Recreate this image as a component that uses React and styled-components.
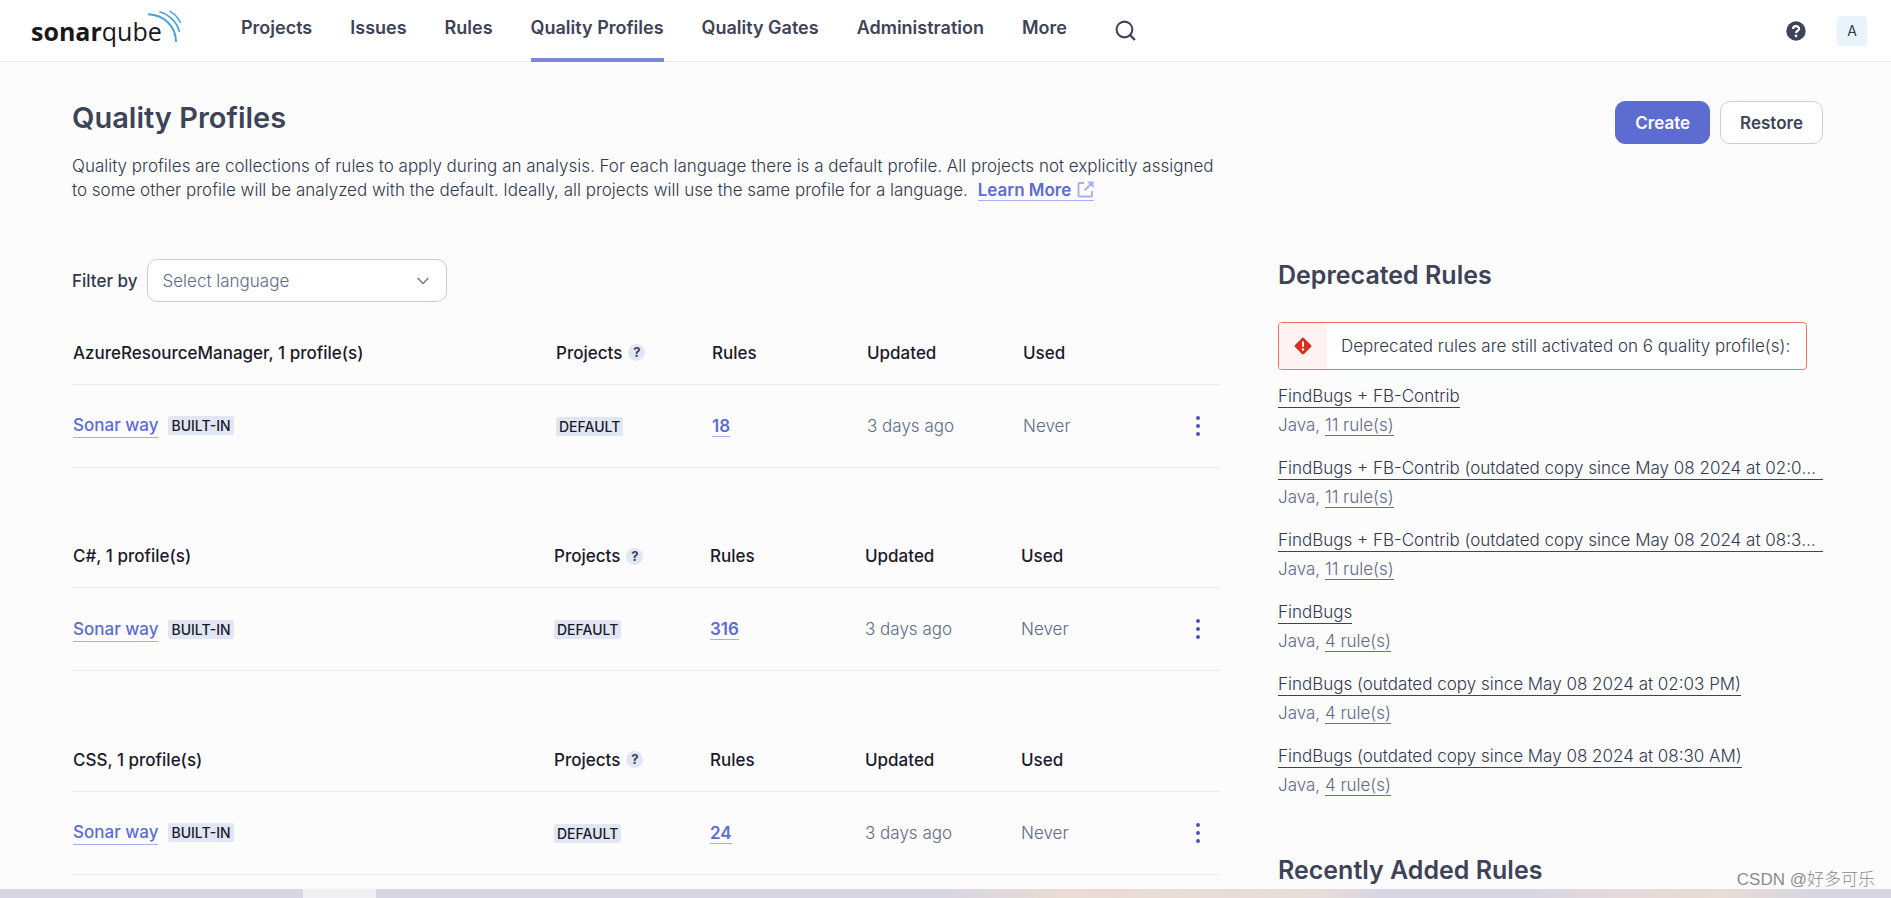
import styled, { createGlobalStyle } from "styled-components";

const GlobalStyle = createGlobalStyle`
  * {
    box-sizing: border-box;
  }

  html,
  body {
    margin: 0;
    height: 100%;
    overflow: hidden;
    background: #fcfcfd;
  }

  #root {
    height: 100%;
  }

  body,
  button,
  select {
    font-family: Inter, "Noto Sans CJK SC", sans-serif;
    font-size: 17px;
    font-weight: 300;
    line-height: 24px;
    color: #33384d;
  }
`;

const navItems = [
  "Projects",
  "Issues",
  "Rules",
  "Quality Profiles",
  "Quality Gates",
  "Administration",
  "More",
];

const languages = [
  { name: "AzureResourceManager", rules: 18, nameWidth: 473 },
  { name: "C#", rules: 316, nameWidth: 471 },
  { name: "CSS", rules: 24, nameWidth: 471 },
];

const deprecated = [
  { name: "FindBugs + FB-Contrib", rules: 11 },
  {
    name: "FindBugs + FB-Contrib (outdated copy since May 08 2024 at 02:03 PM)",
    rules: 11,
  },
  {
    name: "FindBugs + FB-Contrib (outdated copy since May 08 2024 at 08:30 AM)",
    rules: 11,
  },
  { name: "FindBugs", rules: 4 },
  { name: "FindBugs (outdated copy since May 08 2024 at 02:03 PM)", rules: 4 },
  { name: "FindBugs (outdated copy since May 08 2024 at 08:30 AM)", rules: 4 },
];

const Logo = () => (
  <LogoLink href="#" aria-label="SonarQube">
    <svg width="152" height="40" viewBox="0 0 152 40">
      <text
        x="0"
        y="31"
        fontFamily="Open Sans, sans-serif"
        fontSize="25"
        fontWeight="700"
        fill="#1b171b"
      >
        sonar
        <tspan fontWeight="400">qube</tspan>
      </text>
      <g fill="none" stroke="#4b9fd5">
        <path d="M117 4.300C133 5 145 16 145 32" strokeWidth="2" />
        <path d="M128.500 1.700C138 4.500 146 12 148.500 22" strokeWidth="1.700" />
        <path d="M138.500 .8C143 3.500 147.500 8 149.700 13" strokeWidth="1.400" />
      </g>
    </svg>
  </LogoLink>
);

const ProfileTable = ({ language }) => (
  <Table>
    <colgroup>
      <col style={{ width: language.nameWidth }} />
      <col style={{ width: 156 }} />
      <col style={{ width: 155 }} />
      <col style={{ width: 156 }} />
      <col />
      <col style={{ width: 54 }} />
    </colgroup>
    <thead>
      <tr>
        <Th>{language.name}, 1 profile(s)</Th>
        <Th>
          <HelpLabel>
            Projects
            <HelpBadge>?</HelpBadge>
          </HelpLabel>
        </Th>
        <Th>Rules</Th>
        <Th>Updated</Th>
        <Th>Used</Th>
        <Th />
      </tr>
    </thead>
    <tbody>
      <tr>
        <Td>
          <NameCell>
            <ProfileLink href="#">Sonar way</ProfileLink>
            <Badge>BUILT-IN</Badge>
          </NameCell>
        </Td>
        <Td>
          <Badge>DEFAULT</Badge>
        </Td>
        <Td>
          <StrongLink href="#">{language.rules}</StrongLink>
        </Td>
        <Td>3 days ago</Td>
        <Td>Never</Td>
        <Td>
          <MenuButton aria-label="Actions">
            <svg width="6" height="24" viewBox="0 0 6 24" fill="#4b56b8">
              <circle cx="3" cy="4" r="2" />
              <circle cx="3" cy="12" r="2" />
              <circle cx="3" cy="20" r="2" />
            </svg>
          </MenuButton>
        </Td>
      </tr>
    </tbody>
  </Table>
);

const App = () => {
  return (
    <Page>
      <GlobalStyle />
      <Header>
        <Logo />
        <Nav>
          {navItems.map((item) => (
            <NavLink key={item} href="#" $active={item === "Quality Profiles"}>
              {item}
            </NavLink>
          ))}
        </Nav>
        <IconButton aria-label="Search">
          <svg width="21" height="21" viewBox="1 1 20 20" fill="none">
            <circle cx="10" cy="10" r="7.500" stroke="#3e4357" strokeWidth="2" />
            <path d="M15.400 15.400L20 20" stroke="#3e4357" strokeWidth="2.200" />
          </svg>
        </IconButton>
        <HeaderRight>
          <IconButton aria-label="Help">
            <svg width="20" height="20" viewBox="0 0 20 20">
              <circle cx="10" cy="10" r="9.700" fill="#3e4357" />
              <path
                d="M7 7.900C7 4.300 13.100 4.300 13.100 7.700C13.100 9.800 10 9.700 10 12"
                fill="none"
                stroke="#fff"
                strokeWidth="2.200"
              />
              <circle cx="10" cy="14.900" r="1.400" fill="#fff" />
            </svg>
          </IconButton>
          <Avatar aria-label="Account">A</Avatar>
        </HeaderRight>
      </Header>

      <Main>
        <TitleRow>
          <Intro>
            <Title>Quality Profiles</Title>
            <p>
              Quality profiles are collections of rules to apply during an
              analysis. For each language there is a default profile. All
              projects not explicitly assigned to some other profile will be
              analyzed with the default. Ideally, all projects will use the same
              profile for a language.{" "}
              <LearnMore href="#">
                Learn More
                <svg width="17" height="17" viewBox="0 0 17 17" fill="none">
                  <path
                    d="M7 2H2.500Q1.500 2 1.500 3V14.500Q1.500 15.500 2.500 15.500H14Q15 15.500 15 14.500V10"
                    stroke="#a6adf0"
                    strokeWidth="1.800"
                  />
                  <path d="M7.500 9.500L14 3" stroke="#a6adf0" strokeWidth="1.800" />
                  <path d="M10 .5H16.500V7Z" fill="#a6adf0" />
                </svg>
              </LearnMore>
            </p>
          </Intro>
          <Actions>
            <Button $primary>Create</Button>
            <Button>Restore</Button>
          </Actions>
        </TitleRow>

        <Columns>
          <section>
            <Filter>
              <label htmlFor="language">Filter by</label>
              <SelectBox>
                <Select id="language" defaultValue="">
                  <option value="">Select language</option>
                  {languages.map((language) => (
                    <option key={language.name}>{language.name}</option>
                  ))}
                </Select>
                <Chevron width="12" height="8" viewBox="0 0 12 8">
                  <path d="M.7 1L6 6.500L11.300 1" fill="none" stroke="#6a7590" strokeWidth="1.300" />
                </Chevron>
              </SelectBox>
            </Filter>
            {languages.map((language) => (
              <ProfileTable key={language.name} language={language} />
            ))}
          </section>

          <aside>
            <SideTitle>Deprecated Rules</SideTitle>
            <Alert role="alert">
              <AlertIcon>
                <svg width="18" height="18" viewBox="0 0 18 18">
                  <path
                    d="M9 .6Q9.600 .6 10 1L17 8Q17.900 9 17 10L10 17Q9 17.900 8 17L1 10Q.1 9 1 8L8 1Q8.400 .6 9 .6Z"
                    fill="#d92d20"
                  />
                  <path d="M9 4.500V9.700" stroke="#fff" strokeWidth="2" />
                  <circle cx="9" cy="12.500" r="1.200" fill="#fff" />
                </svg>
              </AlertIcon>
              <AlertText>
                Deprecated rules are still activated on 6 quality profile(s):
              </AlertText>
            </Alert>
            <RuleList>
              {deprecated.map((profile) => (
                <RuleItem key={profile.name}>
                  <RuleLink href="#">{profile.name}</RuleLink>
                  <RuleMeta>
                    Java, <CountLink href="#">{profile.rules} rule(s)</CountLink>
                  </RuleMeta>
                </RuleItem>
              ))}
            </RuleList>
            <SideTitle>Recently Added Rules</SideTitle>
          </aside>
        </Columns>
      </Main>

      <BottomStrip>
        <StripThumb />
      </BottomStrip>
      <Watermark>CSDN @好多可乐</Watermark>
    </Page>
  );
};

const Page = styled.div`
  position: relative;
  display: flex;
  flex-direction: column;
  height: 100%;
  overflow: hidden;
`;

const Header = styled.header`
  display: flex;
  flex: none;
  align-items: stretch;
  height: 62px;
  padding: 0 24px 0 31px;
  background: #fff;
  border-bottom: 1px solid #ebebeb;
`;

const LogoLink = styled.a`
  display: flex;
  align-items: center;
  padding-bottom: 2px;
`;

const Nav = styled.nav`
  display: flex;
  gap: 38px;
  margin: 0 48px 0 58px;
`;

const NavLink = styled.a`
  height: 62px;
  padding-top: 16px;
  border-bottom: 4px solid ${({ $active }) => ($active ? "#7b87d9" : "transparent")};
  color: #3e4357;
  font-size: 18px;
  font-weight: 600;
  text-decoration: none;
  white-space: nowrap;
`;

const IconButton = styled.button`
  display: flex;
  align-items: center;
  padding: 0;
  border: 0;
  background: none;
`;

const HeaderRight = styled.div`
  display: flex;
  align-items: center;
  gap: 31px;
  margin-left: auto;
`;

const Avatar = styled.button`
  width: 30px;
  height: 30px;
  padding: 0;
  border: 0;
  border-radius: 4px;
  background: #e8f4fb;
  font-size: 14px;
  font-weight: 400;
`;

const Main = styled.main`
  flex: 1;
  min-height: 0;
  overflow: hidden;
  padding: 38px 68px 0 72px;
`;

const TitleRow = styled.div`
  display: flex;
  justify-content: space-between;
  align-items: flex-start;
  margin-bottom: 57px;
`;

const Intro = styled.div`
  width: 66%;

  p {
    margin: 0;
  }
`;

const Title = styled.h1`
  margin: 0 0 18px;
  color: #3e4357;
  font-size: 29px;
  font-weight: 600;
  line-height: 36px;
`;

const LearnMore = styled.a`
  margin-left: 5px;
  color: #5d6cd0;
  border-bottom: 1px solid #a6adf0;
  font-weight: 600;
  text-decoration: none;
  white-space: nowrap;

  svg {
    margin-left: 6px;
    vertical-align: -2px;
  }
`;

const Actions = styled.div`
  display: flex;
  gap: 10px;
  padding-top: 1px;
`;

const Button = styled.button`
  height: 43px;
  padding: 0 19px;
  border: 1px solid ${({ $primary }) => ($primary ? "#5d6cd0" : "#c5cddf")};
  border-radius: 10px;
  background: ${({ $primary }) => ($primary ? "#5d6cd0" : "#fff")};
  color: ${({ $primary }) => ($primary ? "#fff" : "#3e4357")};
  font-weight: 600;
`;

const Columns = styled.div`
  display: grid;
  grid-template-columns: minmax(0, 1148fr) minmax(0, 545fr);
  column-gap: 58px;
`;

const Filter = styled.div`
  display: flex;
  align-items: center;
  gap: 9px;
  margin-bottom: 20px;

  label {
    font-weight: 500;
  }
`;

const SelectBox = styled.div`
  position: relative;
  width: 300px;
`;

const Select = styled.select`
  width: 100%;
  height: 43px;
  padding: 0 15px;
  border: 1px solid #c5cddf;
  border-radius: 10px;
  background: #fff;
  color: #5f6a85;
  appearance: none;
`;

const Chevron = styled.svg`
  position: absolute;
  top: 18px;
  right: 18px;
  pointer-events: none;
`;

const Table = styled.table`
  width: 100%;
  margin-bottom: 58px;
  table-layout: fixed;
  border-collapse: collapse;
`;

const Th = styled.th`
  height: 62px;
  padding: 0 0 0 11px;
  border-bottom: 1px solid #ebebeb;
  color: #1b1a2b;
  font-weight: 500;
  text-align: left;

  &:first-child {
    padding-left: 1px;
  }
`;

const Td = styled.td`
  height: 83px;
  padding: 0 0 0 11px;
  border-bottom: 1px solid #ebebeb;
  color: #5f6a85;

  &:first-child {
    padding-left: 1px;
  }
`;

const HelpLabel = styled.span`
  display: flex;
  align-items: center;
  gap: 6px;
`;

const HelpBadge = styled.span`
  width: 17px;
  height: 17px;
  border-radius: 50%;
  background: #e1e6f3;
  color: #3e4357;
  font-size: 13px;
  font-weight: 700;
  line-height: 17px;
  text-align: center;
`;

const NameCell = styled.div`
  display: flex;
  align-items: center;
  gap: 10px;
`;

const StrongLink = styled.a`
  color: #5d6cd0;
  border-bottom: 1px solid #a6adf0;
  font-weight: 600;
  text-decoration: none;
`;

const ProfileLink = styled(StrongLink)`
  font-weight: 500;
  line-height: 24px;
`;

const Badge = styled.span`
  display: inline-block;
  padding: 0 3px;
  border-radius: 2px;
  background: #e1e6f3;
  color: #1b1a2b;
  font-size: 14px;
  font-weight: 500;
  line-height: 19px;
`;

const MenuButton = styled(IconButton)`
  padding: 8px 18px;
`;

const SideTitle = styled.h2`
  margin: 0;
  color: #3e4357;
  font-size: 25px;
  font-weight: 600;
  line-height: 32px;
`;

const Alert = styled.div`
  display: inline-flex;
  height: 48px;
  margin-top: 31px;
  overflow: hidden;
  border: 1px solid #f97066;
  border-radius: 4px;
  background: #fff;
  vertical-align: top;
`;

const AlertIcon = styled.span`
  display: flex;
  flex: none;
  align-items: center;
  justify-content: center;
  width: 48px;
  background: #fef3f2;
`;

const AlertText = styled.span`
  padding: 11px 16px 11px 14px;
  white-space: nowrap;
`;

const RuleList = styled.ul`
  margin: 16px 0 36px;
  padding: 0;
  list-style: none;
`;

const RuleItem = styled.li`
  display: flex;
  flex-direction: column;
  align-items: flex-start;
  height: 72px;
`;

const RuleLink = styled.a`
  max-width: 100%;
  margin-bottom: 5px;
  overflow: hidden;
  border-bottom: 1px solid #3e4357;
  color: #33384d;
  line-height: 21px;
  text-decoration: none;
  text-overflow: ellipsis;
  white-space: nowrap;
`;

const RuleMeta = styled.div`
  color: #5f6a85;
`;

const CountLink = styled.a`
  color: #5f6a85;
  border-bottom: 1px solid #6a7590;
  text-decoration: none;
`;

const BottomStrip = styled.div`
  flex: none;
  height: 9px;
  background: linear-gradient(
    to right,
    #d8d6e4 50%,
    #eadbd3 56%,
    #e8dcda 70%,
    #d8d6e4 73%,
    #d8d6e4 81%,
    #e6d8dc 85%,
    #e9dcd3 91%,
    #d8d6e4 96%
  );
`;

const StripThumb = styled.div`
  width: 73px;
  height: 9px;
  margin-left: 16%;
  background: #f0eff4;
`;

const Watermark = styled.div`
  position: absolute;
  right: 16px;
  bottom: 6px;
  color: #8a8a8e;
  font-family: "Liberation Sans", "Noto Sans CJK SC", sans-serif;
  font-size: 17px;
`;

export default App;
